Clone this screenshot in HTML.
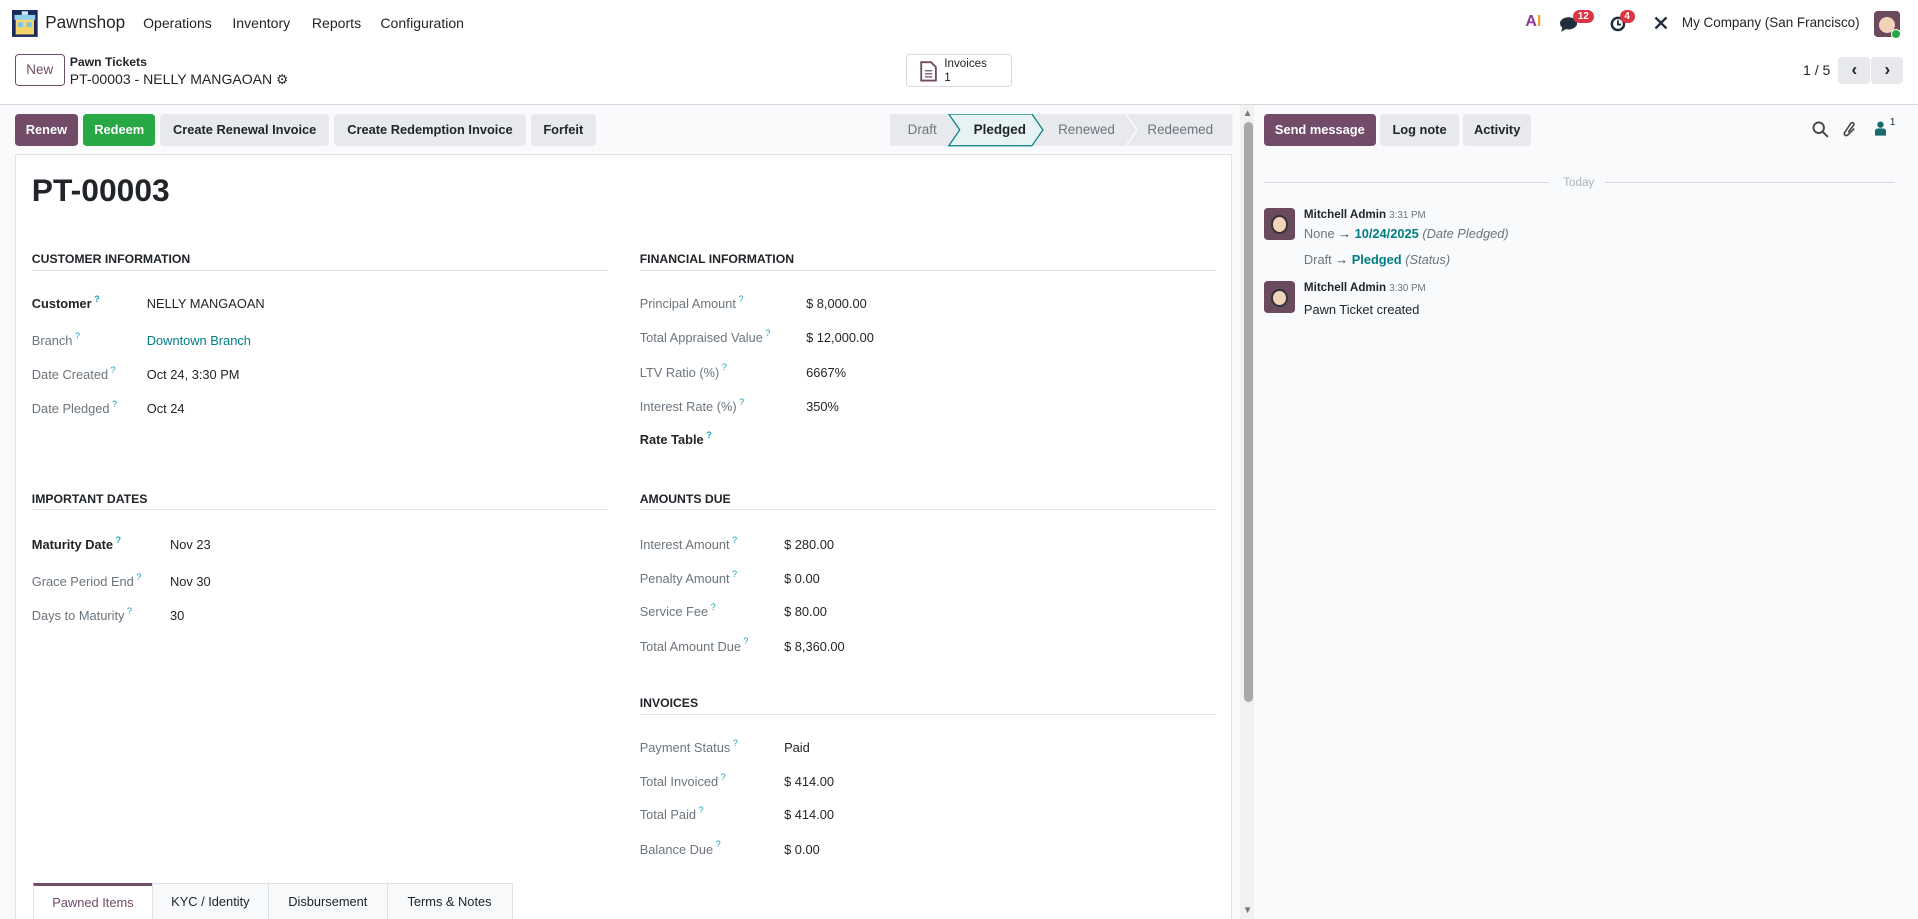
<!DOCTYPE html>
<html><head><meta charset="utf-8"><style>
*{box-sizing:border-box;margin:0;padding:0}
html,body{width:1918px;height:919px;overflow:hidden;background:#fff}
#r{zoom:1.2232;width:1568px;height:752px;position:relative;font-family:"Liberation Sans",sans-serif;font-size:10.5px;color:#212529;overflow:hidden}
.a{position:absolute;white-space:nowrap}
.btn{position:absolute;height:26px;line-height:26px;border-radius:3px;text-align:center;font-weight:bold;font-size:10.5px}
.g{background:#e7e9ed;color:#212529}
.lb{color:#6c757d}
.lbb{color:#212529;font-weight:bold}
sup{color:#17a2b8;font-size:7.5px;margin-left:2px;vertical-align:baseline;position:relative;top:-5px;line-height:0}
.h{position:absolute;font-weight:bold;font-size:10px;border-bottom:1px solid #dee2e6;padding-bottom:3px}
.tab{position:absolute;top:722px;height:30px;line-height:30px;border:1px solid #dee2e6;background:#f8f9fa;text-align:center;font-size:10.5px}
</style></head><body><div id="r">
<svg class="a" style="left:10px;top:8px" width="21" height="22" viewBox="0 0 21 22"><rect width="21" height="22" fill="#1b2a5a"/><rect x="3" y="5" width="15" height="15" fill="#f6d36b"/><rect x="2" y="4" width="17" height="4" fill="#8fd0f0"/><rect x="5" y="10" width="4" height="4" fill="#7cc4ec"/><rect x="12" y="10" width="4" height="4" fill="#7cc4ec"/><rect x="8" y="1" width="5" height="3" fill="#cfe8f7"/></svg>
<div class="a" style="left:37px;top:11px;font-size:14px">Pawnshop</div>
<div class="a" style="left:117px;top:12px;font-size:11.5px">Operations</div>
<div class="a" style="left:190px;top:12px;font-size:11.5px">Inventory</div>
<div class="a" style="left:255px;top:12px;font-size:11.5px">Reports</div>
<div class="a" style="left:311px;top:12px;font-size:11.5px">Configuration</div>
<div class="a" style="left:1247px;top:11px;font-size:13px;font-weight:bold;color:#8b3a9e">A<span style="color:#e8a33a">I</span></div>
<svg class="a" style="left:1275px;top:13px" width="14" height="13" viewBox="0 0 14 13"><ellipse cx="7" cy="6" rx="7" ry="5" fill="#1f2d3d"/><path d="M2 9 L1 13 L6 10Z" fill="#1f2d3d"/></svg>
<div class="a" style="left:1286px;top:8px;background:#dc3545;color:#fff;font-size:8px;border-radius:7px;padding:1px 4px;font-weight:bold">12</div>
<svg class="a" style="left:1316px;top:13px" width="13" height="13" viewBox="0 0 13 13"><circle cx="6.5" cy="6.5" r="5" fill="none" stroke="#1f2d3d" stroke-width="2"/><path d="M6.5 3.5V7H9" stroke="#1f2d3d" stroke-width="1.5" fill="none"/></svg>
<div class="a" style="left:1324px;top:8px;background:#dc3545;color:#fff;font-size:8px;border-radius:7px;padding:1px 4px;font-weight:bold">4</div>
<svg class="a" style="left:1351px;top:12px" width="13" height="13" viewBox="0 0 13 13"><path d="M2 2L11 11M11 2L2 11" stroke="#1f2d3d" stroke-width="2"/></svg>
<div class="a" style="left:1375px;top:12px;font-size:11px">My Company (San Francisco)</div>
<div class="a" style="left:1532px;top:9px;width:21px;height:21px;background:#6b4a5e;border-radius:3px"><div style="margin:5px 4px;width:13px;height:13px;background:#f1d3b8;border-radius:50%"></div></div>
<div class="a" style="left:1546px;top:24px;width:8px;height:8px;background:#28a745;border-radius:50%;border:1px solid #fff"></div>
<div class="a" style="left:12px;top:44px;width:41px;height:26px;border:1px solid #714b67;border-radius:3px;color:#714b67;text-align:center;line-height:24px;font-size:11px">New</div>
<div class="a" style="left:57px;top:45px;font-size:10px;font-weight:bold">Pawn Tickets</div>
<div class="a" style="left:57px;top:58px;font-size:11.5px">PT-00003 - NELLY MANGAOAN <span style="font-size:11px">⚙</span></div>
<div class="a" style="left:741px;top:44px;width:86px;height:27px;border:1px solid #d8dadd;border-radius:3px"></div>
<svg class="a" style="left:752px;top:50px" width="14" height="17" viewBox="0 0 14 17"><path d="M1 1H9L13 5V16H1Z" fill="none" stroke="#714b67" stroke-width="1.5"/><path d="M4 8H10M4 10.5H10M4 13H10" stroke="#714b67"/></svg>
<div class="a" style="left:772px;top:47px;font-size:9.5px;line-height:11px">Invoices<br>1</div>
<div class="a" style="left:1474px;top:51px;font-size:11.5px">1 / 5</div>
<div class="btn g" style="left:1503px;top:47px;width:26px;height:22px;line-height:22px;font-size:14px">‹</div>
<div class="btn g" style="left:1530px;top:47px;width:26px;height:22px;line-height:22px;font-size:14px">›</div>
<div class="a" style="left:0;top:85px;width:1568px;height:667px;background:#f9fafb;border-top:1px solid #d8dadd"></div>
<div class="btn" style="left:12px;top:93px;width:52px;background:#714b67;color:#fff">Renew</div>
<div class="btn" style="left:68px;top:93px;width:59px;background:#28a745;color:#fff">Redeem</div>
<div class="btn g" style="left:131px;top:93px;width:138px">Create Renewal Invoice</div>
<div class="btn g" style="left:273px;top:93px;width:157px">Create Redemption Invoice</div>
<div class="btn g" style="left:434px;top:93px;width:53px">Forfeit</div>
<svg class="a" style="left:728px;top:93px" width="280" height="27" viewBox="0 0 280 27"><rect width="280" height="26" fill="#e7e9ed"/><path d="M48 0H116L125 13L116 26H48L57 13Z" fill="#e6f2f3" stroke="#017e84" stroke-width="1"/><path d="M193 0L202 13L193 26" fill="none" stroke="#fff" stroke-width="1"/></svg>
<div class="a" style="left:742px;top:100px;color:#6c757d;font-size:11px">Draft</div>
<div class="a" style="left:796px;top:100px;font-weight:bold;font-size:11px">Pledged</div>
<div class="a" style="left:865px;top:100px;color:#6c757d;font-size:11px">Renewed</div>
<div class="a" style="left:938px;top:100px;color:#6c757d;font-size:11px">Redeemed</div>
<div class="a" style="left:12px;top:126px;width:995px;height:630px;background:#fff;border:1px solid #dee2e6"></div>
<div class="a" style="left:26px;top:141px;font-size:26px;font-weight:600">PT-00003</div>
<div class="h" style="left:26px;top:206px;width:471px">CUSTOMER INFORMATION</div>
<div class="a lbb" style="left:26px;top:242px">Customer<sup>?</sup></div><div class="a" style="left:120px;top:242px">NELLY MANGAOAN</div>
<div class="a lb" style="left:26px;top:272px">Branch<sup>?</sup></div><div class="a" style="left:120px;top:272px;color:#017e84">Downtown Branch</div>
<div class="a lb" style="left:26px;top:300px">Date Created<sup>?</sup></div><div class="a" style="left:120px;top:300px">Oct 24, 3:30 PM</div>
<div class="a lb" style="left:26px;top:328px">Date Pledged<sup>?</sup></div><div class="a" style="left:120px;top:328px">Oct 24</div>
<div class="h" style="left:523px;top:206px;width:471px">FINANCIAL INFORMATION</div>
<div class="a lb" style="left:523px;top:242px">Principal Amount<sup>?</sup></div><div class="a" style="left:659px;top:242px">$ 8,000.00</div>
<div class="a lb" style="left:523px;top:270px">Total Appraised Value<sup>?</sup></div><div class="a" style="left:659px;top:270px">$ 12,000.00</div>
<div class="a lb" style="left:523px;top:298px">LTV Ratio (%)<sup>?</sup></div><div class="a" style="left:659px;top:298px">6667%</div>
<div class="a lb" style="left:523px;top:326px">Interest Rate (%)<sup>?</sup></div><div class="a" style="left:659px;top:326px">350%</div>
<div class="a lbb" style="left:523px;top:353px">Rate Table<sup>?</sup></div>
<div class="h" style="left:26px;top:402px;width:471px">IMPORTANT DATES</div>
<div class="a lbb" style="left:26px;top:439px">Maturity Date<sup>?</sup></div><div class="a" style="left:139px;top:439px">Nov 23</div>
<div class="a lb" style="left:26px;top:469px">Grace Period End<sup>?</sup></div><div class="a" style="left:139px;top:469px">Nov 30</div>
<div class="a lb" style="left:26px;top:497px">Days to Maturity<sup>?</sup></div><div class="a" style="left:139px;top:497px">30</div>
<div class="h" style="left:523px;top:402px;width:471px">AMOUNTS DUE</div>
<div class="a lb" style="left:523px;top:439px">Interest Amount<sup>?</sup></div><div class="a" style="left:641px;top:439px">$ 280.00</div>
<div class="a lb" style="left:523px;top:467px">Penalty Amount<sup>?</sup></div><div class="a" style="left:641px;top:467px">$ 0.00</div>
<div class="a lb" style="left:523px;top:494px">Service Fee<sup>?</sup></div><div class="a" style="left:641px;top:494px">$ 80.00</div>
<div class="a lb" style="left:523px;top:522px">Total Amount Due<sup>?</sup></div><div class="a" style="left:641px;top:522px">$ 8,360.00</div>
<div class="h" style="left:523px;top:569px;width:471px">INVOICES</div>
<div class="a lb" style="left:523px;top:605px">Payment Status<sup>?</sup></div><div class="a" style="left:641px;top:605px">Paid</div>
<div class="a lb" style="left:523px;top:633px">Total Invoiced<sup>?</sup></div><div class="a" style="left:641px;top:633px">$ 414.00</div>
<div class="a lb" style="left:523px;top:660px">Total Paid<sup>?</sup></div><div class="a" style="left:641px;top:660px">$ 414.00</div>
<div class="a lb" style="left:523px;top:688px">Balance Due<sup>?</sup></div><div class="a" style="left:641px;top:688px">$ 0.00</div>
<div class="tab" style="left:27px;width:98px;background:#fff;border-top:3px solid #714b67;border-bottom:none;color:#714b67;line-height:28px">Pawned Items</div>
<div class="tab" style="left:124px;width:96px">KYC / Identity</div>
<div class="tab" style="left:219px;width:98px">Disbursement</div>
<div class="tab" style="left:316px;width:103px">Terms &amp; Notes</div>
<div class="a" style="left:1014px;top:86px;width:11px;height:666px;background:#f1f1f1"></div>
<div class="a" style="left:1017px;top:100px;width:7px;height:474px;background:#a8a8a8;border-radius:4px"></div>
<div class="a" style="left:1016px;top:740px;font-size:8px;color:#777">▼</div>
<div class="a" style="left:1016px;top:88px;font-size:8px;color:#777">▲</div>
<div class="btn" style="left:1033px;top:93px;width:92px;background:#714b67;color:#fff">Send message</div>
<div class="btn g" style="left:1128px;top:93px;width:65px">Log note</div>
<div class="btn g" style="left:1196px;top:93px;width:56px">Activity</div>
<svg class="a" style="left:1481px;top:99px" width="14" height="14" viewBox="0 0 14 14"><circle cx="5.5" cy="5.5" r="4.3" fill="none" stroke="#444" stroke-width="1.5"/><path d="M8.5 8.5L13 13" stroke="#444" stroke-width="1.6"/></svg>
<svg class="a" style="left:1506px;top:98px" width="13" height="15" viewBox="0 0 13 15"><path d="M10 7L5 12C3.5 13.5 1.5 12.5 2 10.5L7 3C8.2 1.5 10.5 2.5 9.5 4.3L5 10" fill="none" stroke="#444" stroke-width="1.3"/></svg>
<svg class="a" style="left:1533px;top:99px" width="9" height="12" viewBox="0 0 9 12"><circle cx="4.5" cy="3" r="2.6" fill="#1a6b6e"/><path d="M0 12V8C0 6.5 1.5 6 4.5 6S9 6.5 9 8V12Z" fill="#1a6b6e"/></svg>
<div class="a" style="left:1545px;top:96px;font-size:8px">1</div>
<div class="a" style="left:1033px;top:149px;width:233px;height:1px;background:#d5d7da"></div>
<div class="a" style="left:1278px;top:144px;font-size:9.5px;color:#adb5bd">Today</div>
<div class="a" style="left:1312px;top:149px;width:237px;height:1px;background:#d5d7da"></div>
<div class="a" style="left:1033px;top:170px;width:26px;height:26px;background:#6b4a5e;border-radius:3px"><div style="margin:6px 6px;width:14px;height:15px;background:#f1d3b8;border-radius:50%;border:2px solid #333"></div></div>
<div class="a" style="left:1066px;top:170px;font-size:9.5px;font-weight:bold">Mitchell Admin <span style="font-weight:normal;font-size:8px;color:#6c757d">3:31 PM</span></div>
<div class="a" style="left:1066px;top:185px;font-size:10.5px;color:#6c757d">None <b style="color:#333">→</b> <b style="color:#017e84">10/24/2025</b> <i>(Date Pledged)</i></div>
<div class="a" style="left:1066px;top:206px;font-size:10.5px;color:#6c757d">Draft <b style="color:#333">→</b> <b style="color:#017e84">Pledged</b> <i>(Status)</i></div>
<div class="a" style="left:1033px;top:230px;width:26px;height:26px;background:#6b4a5e;border-radius:3px"><div style="margin:6px 6px;width:14px;height:15px;background:#f1d3b8;border-radius:50%;border:2px solid #333"></div></div>
<div class="a" style="left:1066px;top:230px;font-size:9.5px;font-weight:bold">Mitchell Admin <span style="font-weight:normal;font-size:8px;color:#6c757d">3:30 PM</span></div>
<div class="a" style="left:1066px;top:247px;font-size:10.5px">Pawn Ticket created</div>
</div></body></html>
